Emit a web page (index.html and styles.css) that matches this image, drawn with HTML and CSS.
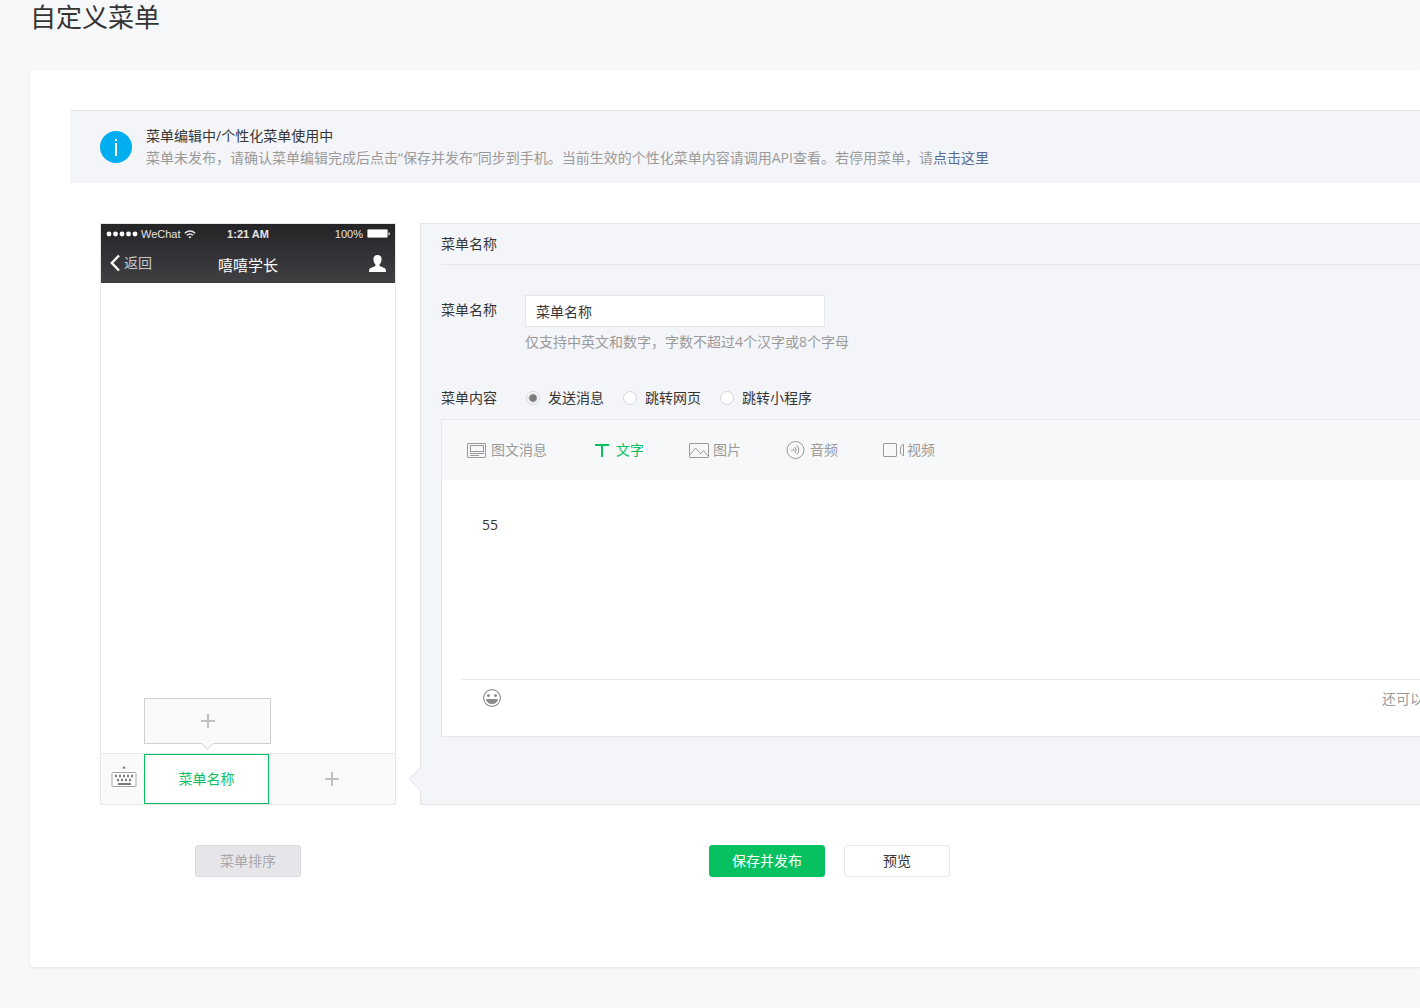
FILE: index.html
```html
<!DOCTYPE html>
<html lang="zh-CN">
<head>
<meta charset="utf-8">
<title>自定义菜单</title>
<link rel="stylesheet" href="styles.css">
</head>
<body>
<main class="page">
  <h1 class="page-title">自定义菜单</h1>
  <section class="card">
    <div class="notice">
      <svg class="notice-icon" width="32" height="32" viewBox="0 0 32 32" aria-hidden="true">
        <circle cx="16" cy="16" r="16" fill="#00aeef"/>
        <rect x="15" y="8" width="2" height="2" fill="#fff"/>
        <rect x="15" y="12" width="2" height="13" fill="#fff"/>
      </svg>
      <div>
        <p class="notice-title">菜单编辑中/个性化菜单使用中</p>
        <p class="notice-text">菜单未发布，请确认菜单编辑完成后点击“保存并发布”同步到手机。当前生效的个性化菜单内容请调用API查看。若停用菜单，请<a href="#">点击这里</a></p>
      </div>
    </div>

    <div class="workspace">
      <section class="phone">
        <header class="phone-head">
          <div class="status">
            <span class="carrier">
              <svg width="32" height="8" viewBox="0 0 32 8" fill="#fff" aria-hidden="true"><circle cx="3" cy="4" r="2.4"/><circle cx="9.5" cy="4" r="2.4"/><circle cx="16" cy="4" r="2.4"/><circle cx="22.500" cy="4" r="2.4"/><circle cx="29" cy="4" r="2.4"/></svg>
              WeChat
              <svg width="12" height="9" viewBox="0 0 12 9" fill="none" stroke="#e4e4e4" stroke-width="1.5" aria-hidden="true"><path d="M.8 3.200Q6-1.200 11.200 3.200M2.800 5.300Q6 2.600 9.200 5.300"/><path d="M4.500 6.900Q6 5.700 7.500 6.900L6 8.500Z" fill="#e4e4e4" stroke="none"/></svg>
            </span>
            <span class="time">1:21 AM</span>
            <span class="battery">100%
              <svg width="23" height="10" viewBox="0 0 23 10" aria-hidden="true"><rect x=".5" y=".5" width="20" height="8" rx="1" fill="#fff" stroke="#aaa"/><path d="M21.500 3v3.500l1.500-1V4z" fill="#ddd"/></svg>
            </span>
          </div>
          <div class="nav">
            <a class="back" href="#">
              <svg width="10" height="18" viewBox="0 0 10 18" fill="none" stroke="#fff" stroke-width="2.400" aria-hidden="true"><path d="M9 1.500L1.800 9L9 16.500"/></svg>
              返回</a>
            <h2 class="account">嘻嘻学长</h2>
            <svg class="profile" width="17" height="17" viewBox="0 0 17 17" fill="#fff" aria-hidden="true"><path d="M8.500 0C5.800 0 4.200 1.800 4.400 4.500C4.500 6.800 5.400 8.300 6.400 9.300V11L1.600 13C.4 13.600 0 14.500 0 17H17C17 14.500 16.600 13.600 15.400 13L10.600 11V9.300C11.600 8.300 12.500 6.800 12.600 4.500C12.800 1.800 11.200 0 8.500 0Z"/></svg>
          </div>
        </header>
        <div class="menu-bar">
          <button class="keyboard" type="button" aria-label="键盘">
            <svg width="26" height="22" viewBox="0 0 26 22" aria-hidden="true">
              <path d="M11 2.500L13 0L15 2.500z" fill="#777b80"/>
              <rect x="1" y="6.500" width="24" height="14" rx="1" fill="#fff" stroke="#a4a6a9"/>
              <path d="M4 10h2m2 0h2m2 0h2m2 0h2m2 0h2M6 14h2m2 0h2m2 0h2m2 0h2" stroke="#777b80" stroke-width="2.500"/>
              <path d="M7 18h13" stroke="#777b80" stroke-width="2"/>
            </svg>
          </button>
          <div class="menu-item">
            <button class="submenu-add" type="button" aria-label="添加子菜单"><span class="plus"></span></button>
            <button class="menu-tab" type="button">菜单名称</button>
          </div>
          <button class="menu-add" type="button" aria-label="添加菜单"><span class="plus"></span></button>
        </div>
      </section>

      <form class="panel">
        <h2 class="panel-title">菜单名称</h2>
        <div class="field">
          <label class="field-label" for="menu-name">菜单名称</label>
          <div>
            <input class="text-input" id="menu-name" type="text" value="菜单名称">
            <p class="hint">仅支持中英文和数字，字数不超过4个汉字或8个字母</p>
          </div>
        </div>
        <div class="field types" role="radiogroup" aria-labelledby="type-label">
          <span class="field-label" id="type-label">菜单内容</span>
          <div class="radios">
            <label class="radio"><input type="radio" name="type" checked>发送消息</label>
            <label class="radio"><input type="radio" name="type">跳转网页</label>
            <label class="radio"><input type="radio" name="type">跳转小程序</label>
          </div>
        </div>
        <div class="editor">
          <div class="tabs">
            <button class="tab" type="button"><svg width="24" height="20" viewBox="0 0 24 20" fill="none" stroke="currentColor" aria-hidden="true"><rect x=".5" y="3.500" width="18" height="14" rx=".5"/><rect x="3.500" y="5.500" width="13" height="6"/><path d="M3 13.500h14M3 15.500h9"/></svg>图文消息</button>
            <button class="tab active" type="button"><svg width="24" height="20" viewBox="0 0 24 20" fill="currentColor" aria-hidden="true"><path d="M3 4h14v2h-6v11H9V6H3z"/></svg>文字</button>
            <button class="tab" type="button"><svg width="24" height="20" viewBox="0 0 24 20" fill="none" stroke="currentColor" aria-hidden="true"><rect x=".5" y="3.500" width="19" height="14" rx=".5"/><path d="M1 15L6.500 8L11.500 14L14.500 10.500L19 16"/></svg>图片</button>
            <button class="tab" type="button"><svg width="24" height="20" viewBox="0 0 24 20" fill="none" stroke="currentColor" aria-hidden="true"><circle cx="9.500" cy="10" r="8.500"/><path d="M7.500 8.700Q8.700 10 7.500 11.300M9 7Q11.300 10 9 13M11 5.500Q14.500 10 11 14.500"/><circle cx="6" cy="10" r=".8" fill="currentColor" stroke="none"/></svg>音频</button>
            <button class="tab" type="button"><svg width="24" height="20" viewBox="0 0 24 20" fill="none" stroke="currentColor" aria-hidden="true"><rect x=".5" y="3.500" width="13" height="13" rx=".5"/><path d="M20.500 4v12L17.500 13V7z"/></svg>视频</button>
          </div>
          <textarea class="message" aria-label="文字内容">55</textarea>
          <div class="editor-foot">
            <button class="emoji" type="button" aria-label="表情">
              <svg width="18" height="18" viewBox="0 0 18 18" aria-hidden="true"><circle cx="9" cy="9" r="8.400" fill="none" stroke="#8c8c8c" stroke-width="1.100"/><circle cx="5.500" cy="6.500" r="1.500" fill="#8c8c8c"/><circle cx="12.500" cy="6.500" r="1.500" fill="#8c8c8c"/><path d="M3 10h12Q14 15 9 15Q4 15 3 10z" fill="#8c8c8c"/></svg>
            </button>
            <span class="counter">还可以</span>
          </div>
        </div>
      </form>
    </div>

    <div class="actions">
      <div class="sort"><button class="btn" type="button" disabled>菜单排序</button></div>
      <div class="submit">
        <button class="btn primary" type="button">保存并发布</button>
        <button class="btn" type="button">预览</button>
      </div>
    </div>
  </section>
</main>
</body>
</html>
```
FILE: styles.css
```css
* {
  box-sizing: border-box;
}

body {
  margin: 0;
  overflow-x: hidden;
  background: #f7f8fa;
  color: #353535;
  font: 14px/22px "Open Sans", "Noto Sans CJK SC", sans-serif;
}

h1, h2, p {
  margin: 0;
  font-weight: 400;
}

button, input, textarea {
  margin: 0;
  font: inherit;
  color: inherit;
}

button {
  padding: 0;
  border: 0;
  background: none;
}

a {
  color: #576b95;
  text-decoration: none;
}

svg {
  display: block;
  flex: none;
}

.page {
  padding: 0 0 41px 30px;
}

.page-title {
  font-size: 26px;
  line-height: 34px;
}

.card {
  margin-top: 36px;
  padding: 40px 0 90px 40px;
  border-radius: 4px 0 0 4px;
  background: #fff;
  box-shadow: 0 1px 3px rgba(0, 0, 0, 0.08);
}

.notice {
  display: flex;
  align-items: center;
  gap: 14px;
  padding: 14px 0 14px 30px;
  border-top: 1px solid #e4e8eb;
  background: #f4f5f9;
}

.notice-text {
  color: #9a9a9a;
}

.workspace {
  display: flex;
  gap: 24px;
  margin: 40px 0 0 30px;
}

/* Phone preview */

.phone {
  display: flex;
  flex: none;
  flex-direction: column;
  justify-content: space-between;
  width: 296px;
  border: 1px solid #e7e7eb;
}

.phone-head {
  height: 59px;
  background: linear-gradient(#242427, #404044);
  color: #fff;
}

.status {
  display: grid;
  grid-template-columns: 1fr auto 1fr;
  align-items: center;
  height: 20px;
  padding: 0 5px;
  color: #e4e4e4;
  font: 11px/20px "Liberation Sans", sans-serif;
}

.carrier, .battery {
  display: flex;
  align-items: center;
  gap: 3px;
}

.battery {
  justify-content: flex-end;
  gap: 4px;
}

.time {
  font-weight: 700;
}

.nav {
  display: grid;
  grid-template-columns: 1fr auto 1fr;
  align-items: center;
  height: 38px;
  padding: 0 9px;
}

.back {
  display: flex;
  align-items: center;
  gap: 4px;
  color: #c8c8ca;
}

.account {
  padding-top: 4px;
  font-size: 15px;
}

.profile {
  justify-self: end;
}

.menu-bar {
  display: grid;
  grid-template-columns: 43px 125px 1fr;
  height: 51px;
  border-top: 1px solid #e7e7eb;
  background: #fafafa;
}

.keyboard, .menu-add {
  display: flex;
  align-items: center;
  justify-content: center;
}

.keyboard {
  padding: 0 0 4px 2px;
}

.menu-item {
  position: relative;
}

.menu-tab {
  width: 100%;
  height: 50px;
  border: 1px solid #07c160;
  background: #fff;
  color: #07c160;
}

.submenu-add {
  position: absolute;
  bottom: 60px;
  left: 0;
  display: flex;
  align-items: center;
  justify-content: center;
  width: 127px;
  height: 46px;
  border: 1px solid #d0d0d0;
  background: #fafafa;
}

.submenu-add::after {
  content: "";
  position: absolute;
  bottom: -5px;
  left: 58px;
  width: 8px;
  height: 8px;
  border: solid #d8d8d8;
  border-width: 0 1px 1px 0;
  background: #fafafa;
  transform: rotate(45deg);
}

.plus {
  width: 14px;
  height: 14px;
  background:
    linear-gradient(#c0c0c0, #c0c0c0) center / 14px 2px no-repeat,
    linear-gradient(#c0c0c0, #c0c0c0) center / 2px 14px no-repeat;
}

/* Menu settings */

.panel {
  position: relative;
  flex: 1;
  min-width: 0;
  padding: 0 0 67px 20px;
  border: 1px solid #e7e7eb;
  border-right: 0;
  background: #f4f5f9;
}

.panel::before {
  content: "";
  position: absolute;
  bottom: 16px;
  left: -9px;
  width: 17px;
  height: 17px;
  border: solid #e7e7eb;
  border-width: 0 0 1px 1px;
  background: #f4f5f9;
  clip-path: polygon(0 0, 100% 100%, 0 100%);
  transform: rotate(45deg);
}

.panel-title {
  height: 41px;
  border-bottom: 1px solid #e7e7eb;
  font-size: 14px;
  line-height: 40px;
}

.field {
  display: flex;
  margin-top: 30px;
}

.field-label {
  width: 84px;
  line-height: 30px;
}

.text-input {
  display: block;
  width: 300px;
  height: 32px;
  padding: 0 10px;
  border: 1px solid #e7e7eb;
  background: #fff;
}

.hint {
  margin-top: 4px;
  color: #9a9a9a;
}

.types {
  align-items: center;
}

.types .field-label {
  line-height: 30px;
}

.radios {
  display: flex;
  gap: 19px;
}

.radio {
  display: flex;
  align-items: center;
  gap: 8px;
}

.radio input {
  width: 14px;
  height: 14px;
  border: 1px solid #d5d5d8;
  border-radius: 50%;
  background: #fff;
  appearance: none;
}

.radio input:checked {
  background: radial-gradient(circle, #7c7c7c 3px, #fff 5px);
}

.radios {
  padding-left: 1px;
}

.editor {
  margin-top: 6px;
  border: 1px solid #e7e7eb;
  border-right: 0;
  background: #fff;
}

.tabs {
  display: flex;
  gap: 45px;
  height: 60px;
  padding-left: 25px;
  background: #f6f8f9;
}

.tab {
  display: flex;
  align-items: center;
  color: #9a9a9a;
}

.tab.active {
  color: #07c160;
}

.message {
  display: block;
  width: 100%;
  height: 199px;
  padding: 34px 40px;
  border: 0;
  outline: 0;
  background: #fff;
  resize: none;
}

.editor-foot {
  display: flex;
  justify-content: space-between;
  height: 57px;
  margin-left: 20px;
  padding: 8px 0 0 21px;
  border-top: 1px solid #e7e7eb;
}

.emoji {
  align-self: flex-start;
  padding-top: 1px;
}

/* The counter runs past the right edge of the window */
.counter {
  width: 38px;
  color: #9a9a9a;
  white-space: nowrap;
}

.actions {
  display: flex;
  gap: 24px;
  margin: 40px 0 0 30px;
}

.sort {
  display: flex;
  justify-content: center;
  width: 296px;
}

.submit {
  display: flex;
  gap: 19px;
  padding-left: 289px;
}

.btn {
  min-width: 106px;
  height: 32px;
  padding: 0 22px;
  border: 1px solid #e7e7eb;
  border-radius: 3px;
  background: #fff;
}

.btn:disabled {
  border-color: #dadade;
  background: #e6e6ea;
  color: #a8a8aa;
}

.btn.primary {
  border-color: #07c160;
  background: #07c160;
  color: #fff;
}
```
